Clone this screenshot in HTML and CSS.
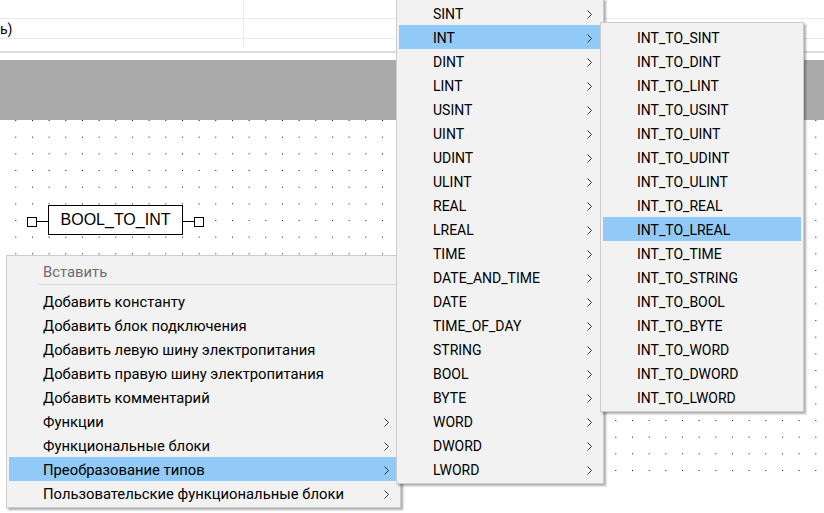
FILE: index.html
```html
<!DOCTYPE html>
<html lang="ru">
<head>
<meta charset="utf-8">
<title>FBD editor</title>
<link rel="stylesheet" href="styles.css">
</head>
<body>
<div class="screen">
  <div class="grid-top">
    <div class="trow r1"><div class="cell c1"></div><div class="cell c2"></div></div>
    <div class="trow r2"><div class="cell c1"><span class="clip">ь)</span></div><div class="cell c2"></div></div>
    <div class="trow r3"><div class="cell c1"></div><div class="cell c2"></div></div>
  </div>
  <div class="hdr-line"></div>
  <div class="band"></div>
  <div class="canvas">
    <svg class="dots" width="824" height="356" aria-hidden="true">
      <defs>
        <pattern id="dotgrid" x="15.3" y="0" width="16.667" height="16.667" patternUnits="userSpaceOnUse">
          <rect x="0" y="0" width="1" height="1" fill="#111"/>
        </pattern>
      </defs>
      <rect x="0" y="0" width="824" height="356" fill="url(#dotgrid)" shape-rendering="crispEdges"/>
    </svg>
    <div class="fb">
      <div class="pin"></div><div class="wire"></div>
      <div class="fbox">BOOL_TO_INT</div>
      <div class="wire"></div><div class="pin"></div>
    </div>
  </div>

  <div class="menu menu-main">
    <div class="mi header">Вставить</div>
    <div class="msep"></div>
    <div class="mi">Добавить константу</div>
    <div class="mi">Добавить блок подключения</div>
    <div class="mi">Добавить левую шину электропитания</div>
    <div class="mi">Добавить правую шину электропитания</div>
    <div class="mi">Добавить комментарий</div>
    <div class="mi sub"><span>Функции</span><svg class="chev" width="5" height="9"><polyline points="0.5,0.5 4.5,4.5 0.5,8.5"/></svg></div>
    <div class="mi sub"><span>Функциональные блоки</span><svg class="chev" width="5" height="9"><polyline points="0.5,0.5 4.5,4.5 0.5,8.5"/></svg></div>
    <div class="mi sub active"><span>Преобразование типов</span><svg class="chev" width="5" height="9"><polyline points="0.5,0.5 4.5,4.5 0.5,8.5"/></svg></div>
    <div class="mi sub"><span>Пользовательские функциональные блоки</span><svg class="chev" width="5" height="9"><polyline points="0.5,0.5 4.5,4.5 0.5,8.5"/></svg></div>
  </div>

  <div class="menu menu-types" id="types"></div>

  <div class="menu menu-conv">
    <div class="mi">INT_TO_SINT</div>
    <div class="mi">INT_TO_DINT</div>
    <div class="mi">INT_TO_LINT</div>
    <div class="mi">INT_TO_USINT</div>
    <div class="mi">INT_TO_UINT</div>
    <div class="mi">INT_TO_UDINT</div>
    <div class="mi">INT_TO_ULINT</div>
    <div class="mi">INT_TO_REAL</div>
    <div class="mi active">INT_TO_LREAL</div>
    <div class="mi">INT_TO_TIME</div>
    <div class="mi">INT_TO_STRING</div>
    <div class="mi">INT_TO_BOOL</div>
    <div class="mi">INT_TO_BYTE</div>
    <div class="mi">INT_TO_WORD</div>
    <div class="mi">INT_TO_DWORD</div>
    <div class="mi">INT_TO_LWORD</div>
  </div>
</div>
<script>
  var types = ["SINT","INT","DINT","LINT","USINT","UINT","UDINT","ULINT","REAL","LREAL","TIME","DATE_AND_TIME","DATE","TIME_OF_DAY","STRING","BOOL","BYTE","WORD","DWORD","LWORD"];
  var host = document.getElementById("types");
  types.forEach(function (t) {
    var d = document.createElement("div");
    d.className = "mi sub" + (t === "INT" ? " active" : "");
    d.innerHTML = '<span>' + t + '</span><svg class="chev" width="5" height="9"><polyline points="0.5,0.5 4.5,4.5 0.5,8.5"/></svg>';
    host.appendChild(d);
  });
</script>
</body>
</html>
```
FILE: styles.css
```css
html, body {
  margin: 0;
  padding: 0;
  background: #ffffff;
}
.screen {
  position: relative;
  width: 824px;
  height: 513px;
  overflow: hidden;
  background: #ffffff;
  font-family: Roboto, "Noto Sans", sans-serif;
  font-size: 14px;
  color: #000;
}
.grid-top {
  display: flex;
  flex-direction: column;
  height: 48px;
}
.trow {
  display: flex;
}
.r1 { height: 18px; border-bottom: 1px solid #ebebeb; }
.r2 { height: 19px; border-bottom: 1px solid #ebebeb; }
.r3 { height: 9px; }
.cell.c1 {
  width: 243px;
  border-right: 1px solid #ebebeb;
  display: flex;
  align-items: center;
  overflow: hidden;
}
.cell.c2 { flex: 1; }
.clip {
  margin-left: 0;
  font-size: 14px;
  line-height: 19px;
  padding-top: 2px;
}
.hdr-line {
  margin-top: 3px;
  height: 2px;
  background: #dcdcdc;
}
.band {
  margin-top: 7px;
  height: 60px;
  background: #aaaaaa;
}
.canvas {
  position: relative;
  height: 356px;
}
.dots {
  position: absolute;
  left: 0;
  top: 0;
  display: block;
}
.fb {
  position: absolute;
  left: 27px;
  top: 85px;
  display: flex;
  align-items: center;
}
.pin {
  width: 8px;
  height: 8px;
  border: 1px solid #000;
  margin-top: 3px;
  background: #fff;
}
.wire {
  width: 11px;
  height: 1px;
  background: #000;
  margin-top: 2px;
}
.fbox {
  box-sizing: border-box;
  width: 135px;
  height: 30px;
  border: 1px solid #000;
  background: #fff;
  display: flex;
  align-items: center;
  justify-content: center;
  font-family: "Liberation Sans", Arial, sans-serif;
  font-size: 16px;
}

.menu {
  position: absolute;
  box-sizing: border-box;
  background: #f2f2f2;
  border: 1px solid #cccccc;
  padding: 2px;
  box-shadow: 2px 2px 2px rgba(0, 0, 0, 0.32);
}
.menu-main {
  left: 6px;
  top: 255px;
  width: 395px;
  padding-top: 3px;
  font-size: 14.8px;
  z-index: 1;
}
.menu-types {
  left: 396px;
  top: -2px;
  width: 208px;
  z-index: 2;
}
.menu-conv {
  left: 600px;
  top: 22px;
  width: 204px;
  z-index: 3;
}
.mi {
  box-sizing: border-box;
  height: 24px;
  display: flex;
  align-items: center;
  justify-content: space-between;
  padding: 2px 9px 0 34px;
  white-space: nowrap;
}
.mi.active {
  background: #91c9f7;
}
.mi.header {
  color: #6d6d6d;
}
.msep {
  height: 1px;
  background: #d7d7d7;
  margin: 1px 0 4px 30px;
}
.chev {
  display: block;
  flex: none;
}
.chev polyline {
  fill: none;
  stroke: #333;
  stroke-width: 1;
}
```
